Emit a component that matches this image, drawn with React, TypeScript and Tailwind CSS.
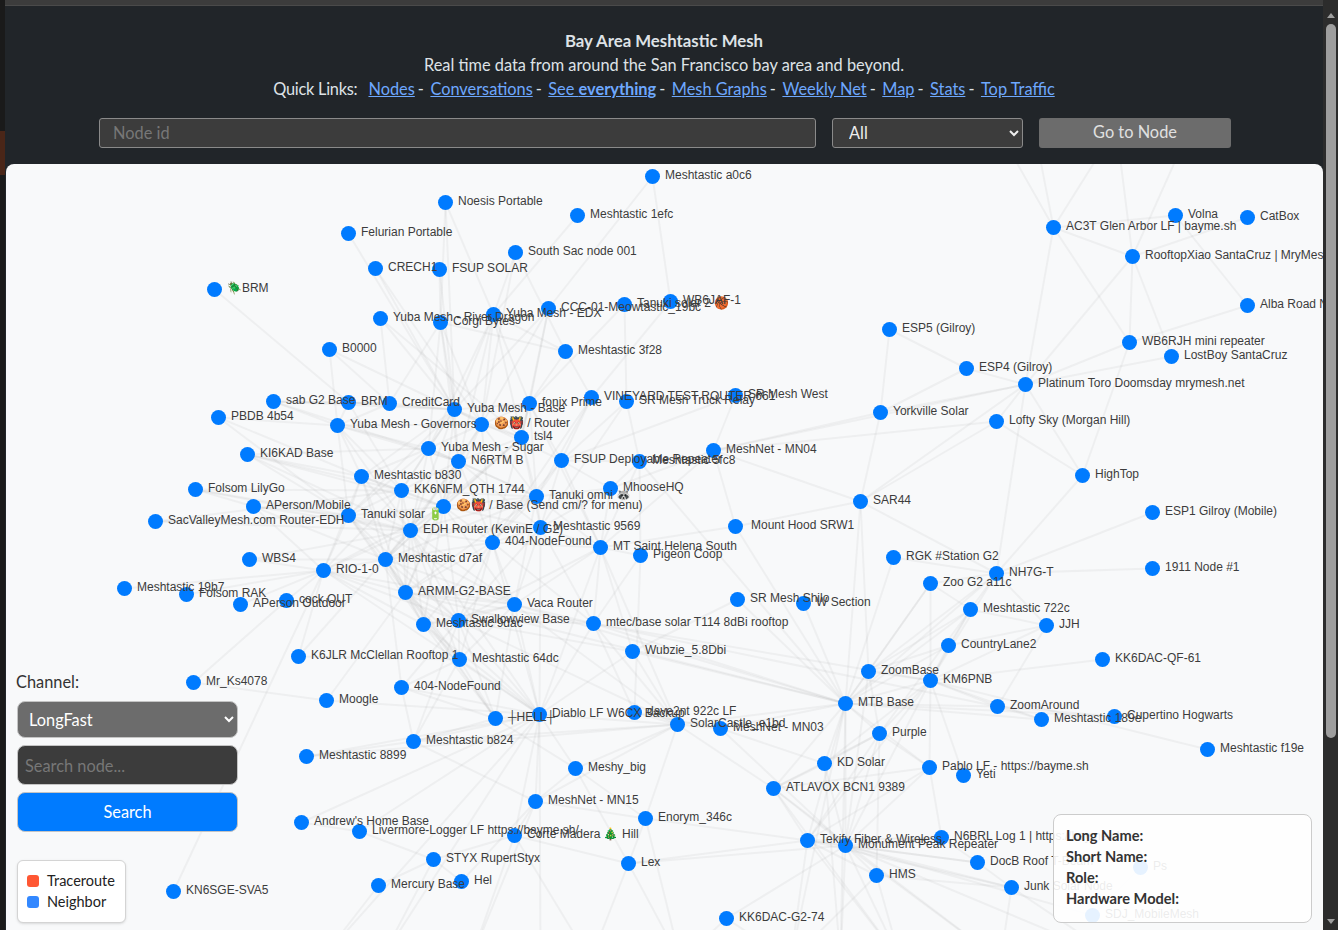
const GRAPH_X = 6;
const GRAPH_Y = 164;

// id, x, y (page coordinates), label, optional label offset
const nodes: [string, number, number, string, number?][] = [
  ["a0c6", 652, 176, "Meshtastic a0c6"],
  ["noesis", 445, 202, "Noesis Portable"],
  ["1efc", 577, 215, "Meshtastic 1efc"],
  ["felurian", 348, 233, "Felurian Portable"],
  ["southsac", 515, 252, "South Sac node 001"],
  ["crech", 375, 268, "CRECH1"],
  ["fsup", 439, 269, "FSUP SOLAR"],
  ["brmbug", 214, 289, "🪲BRM"],
  ["river", 380, 318, "Yuba Mesh - River Dragon"],
  ["corgi", 440, 322, "Corgi Bytes"],
  ["edx", 493, 314, "Yuba Mesh - EDX"],
  ["ccc", 548, 308, "CCC-01-Meowtastic_19bc"],
  ["tanuki2", 624, 304, "Tanuki solar 2 🏀"],
  ["wb6", 670, 301, "WB6JAF-1"],
  ["b0000", 329, 349, "B0000"],
  ["3f28", 565, 351, "Meshtastic 3f28"],
  ["esp5", 889, 329, "ESP5 (Gilroy)"],
  ["esp4", 966, 368, "ESP4 (Gilroy)"],
  ["ac3t", 1053, 227, "AC3T Glen Arbor LF | bayme.sh"],
  ["volna", 1175, 215, "Volna"],
  ["catbox", 1247, 217, "CatBox"],
  ["rooftop", 1132, 256, "RooftopXiao SantaCruz | MryMesh"],
  ["alba", 1247, 305, "Alba Road Node"],
  ["wb6rjh", 1129, 342, "WB6RJH mini repeater"],
  ["lostboy", 1171, 356, "LostBoy SantaCruz"],
  ["platinum", 1025, 384, "Platinum Toro Doomsday mrymesh.net"],
  ["lofty", 996, 421, "Lofty Sky (Morgan Hill)"],
  ["yorkville", 880, 412, "Yorkville Solar"],
  ["sab", 273, 401, "sab G2 Base"],
  ["brm", 348, 402, "BRM"],
  ["credit", 389, 403, "CreditCard"],
  ["yubabase", 454, 409, "Yuba Mesh - Base"],
  ["fonix", 529, 403, "fonix Prime"],
  ["vineyard", 591, 397, "VINEYARD TEST ROUTER 661"],
  ["truck", 626, 401, "SR Mesh Truck Relay"],
  ["srwest", 735, 395, "SR Mesh West"],
  ["pbdb", 218, 417, "PBDB 4b54"],
  ["gov", 337, 425, "Yuba Mesh - Governors"],
  ["router", 481, 424, "🍪👹 / Router"],
  ["tsl4", 521, 437, "tsl4"],
  ["ki6kad", 247, 454, "KI6KAD Base"],
  ["sugar", 428, 448, "Yuba Mesh - Sugar"],
  ["n6rtm", 458, 461, "N6RTM B"],
  ["deploy", 561, 460, "FSUP Deployable Repeater"],
  ["5fc8", 639, 461, "Meshtastic 5fc8"],
  ["mn04", 713, 450, "MeshNet - MN04"],
  ["b830", 361, 476, "Meshtastic b830"],
  ["kk6nfm", 401, 490, "KK6NFM_QTH 1744"],
  ["lily", 195, 489, "Folsom LilyGo"],
  ["mhoose", 610, 488, "MhooseHQ"],
  ["omni", 536, 496, "Tanuki omni 🦝"],
  ["sar44", 860, 501, "SAR44"],
  ["hightop", 1082, 475, "HighTop"],
  ["esp1", 1152, 512, "ESP1 Gilroy (Mobile)"],
  ["mobile", 253, 506, "APerson/Mobile"],
  ["base", 443, 506, "🍪👹 / Base (Send cm/? for menu)"],
  ["solar", 348, 515, "Tanuki solar 🔋"],
  ["sacvalley", 155, 521, "SacValleyMesh.com Router-EDH"],
  ["edh", 410, 530, "EDH Router (KevinE / G2)"],
  ["9569", 540, 527, "Meshtastic 9569"],
  ["srw1", 735, 526, "Mount Hood SRW1", 15.5],
  ["404a", 492, 542, "404-NodeFound"],
  ["helena", 600, 547, "MT Saint Helena South"],
  ["pigeon", 640, 555, "Pigeon Coop"],
  ["wbs4", 249, 559, "WBS4"],
  ["d7af", 385, 559, "Meshtastic d7af"],
  ["rio", 323, 570, "RIO-1-0"],
  ["rgk", 893, 557, "RGK #Station G2"],
  ["nh7g", 996, 573, "NH7G-T"],
  ["zoo", 930, 583, "Zoo G2 a11c"],
  ["1911", 1152, 568, "1911 Node #1"],
  ["19b7", 124, 588, "Meshtastic 19b7"],
  ["rak", 186, 594, "Folsom RAK"],
  ["outdoor", 240, 604, "APerson Outdoor"],
  ["cock", 286, 600, "cock OUT"],
  ["armm", 405, 592, "ARMM-G2-BASE"],
  ["vaca", 514, 604, "Vaca Router"],
  ["shilo", 737, 599, "SR Mesh Shilo"],
  ["wsection", 803, 603, "W Section"],
  ["722c", 970, 609, "Meshtastic 722c"],
  ["jjh", 1046, 625, "JJH"],
  ["swallow", 458, 620, "Swallowview Base"],
  ["9dac", 423, 624, "Meshtastic 9dac"],
  ["mtec", 593, 623, "mtec/base solar T114 8dBi rooftop"],
  ["k6jlr", 298, 656, "K6JLR McClellan Rooftop 1"],
  ["64dc", 459, 659, "Meshtastic 64dc"],
  ["wubzie", 632, 651, "Wubzie_5.8Dbi"],
  ["country", 948, 645, "CountryLane2"],
  ["qf61", 1102, 659, "KK6DAC-QF-61"],
  ["mrks", 193, 682, "Mr_Ks4078"],
  ["zoombase", 868, 671, "ZoomBase"],
  ["km6pnb", 930, 680, "KM6PNB"],
  ["404b", 401, 687, "404-NodeFound"],
  ["moogle", 326, 700, "Moogle"],
  ["mtb", 845, 703, "MTB Base"],
  ["zoomaround", 997, 706, "ZoomAround"],
  ["hell", 495, 718, "┼HELL┼"],
  ["diablo", 539, 714, "Diablo LF W6CX Backup"],
  ["dave", 634, 712, "dave2nt 922c LF"],
  ["castle", 677, 724, "SolarCastle_e1bd"],
  ["mn03", 720, 728, "MeshNet - MN03"],
  ["189e", 1041, 719, "Meshtastic 189e"],
  ["cupertino", 1114, 716, "Cupertino Hogwarts"],
  ["purple", 879, 733, "Purple"],
  ["b824", 413, 741, "Meshtastic b824"],
  ["8899", 306, 756, "Meshtastic 8899"],
  ["f19e", 1207, 749, "Meshtastic f19e"],
  ["kd", 824, 763, "KD Solar"],
  ["pablo", 929, 767, "Pablo LF - https://bayme.sh"],
  ["yeti", 963, 775, "Yeti"],
  ["meshy", 575, 768, "Meshy_big"],
  ["atlavox", 773, 788, "ATLAVOX BCN1 9389"],
  ["mn15", 535, 801, "MeshNet - MN15"],
  ["enorym", 645, 818, "Enorym_346c"],
  ["andrew", 301, 822, "Andrew's Home Base"],
  ["livermore", 359, 831, "Livermore-Logger LF https://bayme.sh/"],
  ["corte", 514, 835, "Corte Madera 🎄 Hill"],
  ["tekify", 807, 840, "Tekify Fiber & Wireless"],
  ["monument", 845, 845, "Monument Peak Repeater"],
  ["n6brl", 941, 837, "N6BRL Log 1 | https://bayme.sh"],
  ["styx", 433, 859, "STYX RupertStyx"],
  ["lex", 628, 863, "Lex"],
  ["docb", 977, 862, "DocB Roof T-Beam"],
  ["ps", 1140, 867, "Ps"],
  ["hms", 876, 875, "HMS"],
  ["hel", 461, 881, "Hel"],
  ["mercury", 378, 885, "Mercury Base"],
  ["junk", 1011, 887, "Junk Solar Node"],
  ["kn6sge", 173, 891, "KN6SGE-SVA5"],
  ["g274", 726, 918, "KK6DAC-G2-74"],
  ["sdj", 1092, 915, "SDJ_MobileMesh"],
];

// nodes just outside the visible part of the graph, only their links show
const offscreen: Record<string, [number, number]> = {
  t1: [1015, 160], t2: [1040, 160], t3: [1095, 160], t4: [1120, 160], t5: [1175, 160],
  b1: [320, 960], b2: [380, 960], b3: [470, 960], b4: [540, 960], b5: [590, 960],
  b6: [680, 960], b7: [790, 960], b8: [840, 960], b9: [900, 960], b10: [1000, 960], b11: [1120, 960],
};

// hub: neighbours
const links: Record<string, string> = {
  a0c6: "wb6 ccc",
  "1efc": "edx",
  noesis: "corgi edx yubabase",
  felurian: "yubabase",
  crech: "yubabase router",
  fsup: "corgi yubabase",
  southsac: "edx 3f28 router",
  brmbug: "brm",
  river: "credit yubabase tsl4",
  corgi: "credit yubabase router 3f28 sugar n6rtm",
  edx: "yubabase fonix 3f28 router n6rtm sugar tsl4",
  ccc: "fonix router tsl4 yubabase",
  tanuki2: "fonix truck",
  wb6: "vineyard",
  b0000: "yubabase credit gov",
  "3f28": "fonix vineyard",
  esp5: "esp4 yorkville",
  esp4: "platinum yorkville",
  ac3t: "t1 t2 t3 volna rooftop wb6rjh platinum",
  rooftop: "t4 t5 catbox wb6rjh lostboy platinum",
  alba: "volna wb6rjh",
  wb6rjh: "platinum hightop",
  lostboy: "platinum",
  platinum: "yorkville lofty hightop sar44 mn04 nh7g",
  lofty: "sar44 hightop mn04",
  yorkville: "mn04 sar44",
  sab: "brm credit gov yubabase n6rtm",
  brm: "credit gov yubabase kk6nfm",
  credit: "yubabase gov",
  yubabase: "router tsl4 sugar n6rtm b830 kk6nfm base solar edh fonix deploy",
  fonix: "router tsl4 omni deploy 404a helena",
  vineyard: "deploy omni 404a",
  truck: "deploy 5fc8 9569",
  srwest: "mn04 deploy",
  pbdb: "gov b830 solar",
  gov: "router sugar b830 kk6nfm solar edh n6rtm",
  router: "tsl4 sugar n6rtm omni base edh 404a",
  tsl4: "n6rtm omni base edh 9569 d7af",
  ki6kad: "sugar b830 solar kk6nfm edh base",
  sugar: "n6rtm b830 kk6nfm base solar edh omni",
  n6rtm: "kk6nfm base omni edh d7af 404a 9569 armm",
  deploy: "omni mhoose 404a helena 5fc8 9569",
  "5fc8": "mhoose helena pigeon mtb",
  mn04: "mhoose sar44 srw1 helena",
  b830: "kk6nfm solar base edh d7af rio armm",
  kk6nfm: "base solar edh d7af rio armm omni",
  lily: "solar kk6nfm edh mobile",
  mhoose: "omni helena 9569",
  omni: "base edh 404a 9569 d7af helena armm vaca",
  sar44: "srw1 mtb zoombase nh7g",
  hightop: "nh7g",
  esp1: "nh7g",
  mobile: "solar edh d7af rio",
  base: "solar edh 404a 9569 d7af rio armm vaca swallow 9dac",
  solar: "edh d7af rio armm swallow 9dac vaca",
  sacvalley: "solar edh kk6nfm",
  edh: "9569 404a d7af rio armm vaca swallow 9dac 64dc diablo k6jlr wbs4",
  "9569": "404a helena vaca swallow mtec diablo",
  srw1: "mtb helena",
  "404a": "helena vaca swallow 9dac mtec 64dc diablo d7af armm",
  helena: "pigeon vaca mtec swallow diablo wubzie castle",
  pigeon: "mtec dave",
  wbs4: "rio d7af",
  d7af: "rio armm vaca swallow 9dac 64dc hell 404b",
  rio: "armm vaca swallow 9dac k6jlr cock outdoor rak 19b7 diablo",
  rgk: "nh7g mtb",
  nh7g: "1911 722c jjh zoo mtb km6pnb zoombase",
  zoo: "722c km6pnb mtb zoombase",
  armm: "vaca swallow 9dac 64dc diablo mtec mtb hell moogle",
  vaca: "swallow 9dac mtec 64dc diablo mtb castle hell",
  shilo: "mtb wubzie",
  wsection: "mtb",
  "722c": "jjh country km6pnb mtb zoombase purple",
  jjh: "country zoomaround km6pnb",
  swallow: "9dac 64dc diablo mtec hell castle 404b wubzie b824",
  "9dac": "64dc hell diablo",
  mtec: "diablo mtb km6pnb zoomaround castle dave",
  k6jlr: "64dc",
  "64dc": "diablo hell 404b b824",
  wubzie: "diablo castle mtb",
  country: "mtb km6pnb zoombase",
  qf61: "km6pnb",
  mrks: "cock moogle",
  zoombase: "mtb km6pnb purple monument",
  km6pnb: "mtb zoomaround 189e f19e purple pablo kd tekify monument yeti",
  "404b": "hell diablo b824",
  moogle: "diablo",
  mtb: "zoomaround 189e cupertino purple kd pablo atlavox tekify monument castle mn03 b7 b8",
  zoomaround: "189e cupertino",
  hell: "b824 diablo meshy",
  diablo: "b824 8899 meshy mn15 andrew b1 b2 b4 castle livermore corte",
  dave: "castle mn03",
  castle: "mn03 meshy atlavox mn15 enorym b824 8899",
  mn03: "kd monument",
  purple: "kd monument tekify pablo atlavox hms",
  b824: "8899 mn15",
  kd: "monument atlavox b8",
  pablo: "monument tekify n6brl atlavox",
  meshy: "mn15 enorym lex",
  atlavox: "tekify monument b9 b10",
  mn15: "enorym corte b3 hel",
  enorym: "lex tekify b6",
  andrew: "livermore",
  livermore: "styx",
  corte: "styx b3 b5 lex",
  tekify: "monument n6brl docb hms lex b7 b9 junk",
  monument: "n6brl docb hms junk lex b8 b9 b10 b11 g274 sdj",
  n6brl: "docb",
  styx: "mercury hel b2",
  lex: "b5 b6",
  docb: "junk",
  hms: "junk b7 b9",
  ps: "sdj",
  junk: "b10 b11",
  kn6sge: "rio",
  mercury: "b1",
  g274: "b6 b7",
};

const position: Record<string, [number, number]> = { ...offscreen };
nodes.forEach(([id, x, y]) => {
  position[id] = [x, y];
});

const edges = Object.entries(links).flatMap(([hub, others]) =>
  others.split(" ").map((other) => [position[hub], position[other]]),
);

const headerLinks = ["Nodes", "Conversations", "See everything", "Mesh Graphs", "Weekly Net", "Map", "Stats", "Top Traffic"];

const MeshGraph = () => (
  <svg width={1317} height={766} className="block" style={{ fontFamily: '"Liberation Sans", "Noto Color Emoji", sans-serif' }}>
    <g transform={`translate(${0.5 - GRAPH_X} ${0.5 - GRAPH_Y})`}>
      {edges.map(([a, b], i) => (
        <line key={i} x1={a[0]} y1={a[1]} x2={b[0]} y2={b[1]} stroke="#a8a8a8" strokeOpacity={0.11} strokeWidth={2} />
      ))}
      {nodes.map(([id, x, y]) => (
        <circle key={id} cx={x} cy={y} r={7.5} fill="#007bff" />
      ))}
      {nodes.map(([id, x, y, label, dx]) => (
        <text key={id} x={x + (dx ?? 12.5)} y={y + 2.6} fontSize={12} fill="#3c3c3c">
          {label}
        </text>
      ))}
    </g>
  </svg>
);

export default function App() {
  return (
    <div className="flex h-[930px] w-[1338px] overflow-hidden bg-[#212529] font-['Lato',sans-serif] text-white">
      <div className="flex w-[5px] flex-col bg-[#1a1a1a]">
        <div className="h-[131px]" />
        <div className="h-[44px] bg-[#4a2618]" />
      </div>

      <div className="flex w-[1318px] flex-col">
        <div className="h-[6px] shrink-0 border-b border-[#4a4a4a] bg-[#3c3c3c]" />
        <div className="h-[158px] shrink-0">
          <div className="pt-[23px] text-center text-[16.35px] leading-6 text-[#dee2e6]">
            <div className="text-[16.8px] font-bold">Bay Area Meshtastic Mesh</div>
            <div>Real time data from around the San Francisco bay area and beyond.</div>
            <div>
              <span className="tracking-[-0.25px]">Quick Links:</span>
              <span className="ml-[11px]">
                {headerLinks.map((link, i) => (
                  <span key={link}>
                    <a href="#" className="text-[#6ea8fe] underline">
                      {link === "See everything" ? (
                        <>
                          See <b>everything</b>
                        </>
                      ) : (
                        link
                      )}
                    </a>
                    {i < headerLinks.length - 1 && <span className="mr-[6.5px] ml-[3px]">-</span>}
                  </span>
                ))}
              </span>
            </div>
          </div>
          <div className="mt-[17px] flex gap-4 pr-[92px] pl-[94px] text-[16.35px]">
            <input
              placeholder="Node id"
              className="h-[30px] min-w-0 flex-1 rounded-[3px] border border-[#8a8a8a] bg-[#3c3c3c] px-[13px] pb-px placeholder:text-[#777]"
            />
            <select className="h-[30px] w-[191px] rounded-[3px] border border-[#8a8a8a] bg-[#3c3c3c] px-[12px] pb-px text-[#eee]">
              <option>All</option>
            </select>
            <button className="h-[30px] w-[192px] rounded-[3px] bg-[#6c6c6c] pb-px text-[#e0e0e0]">Go to Node</button>
          </div>
        </div>

        <div className="relative ml-px flex-1 overflow-hidden rounded-t-lg bg-[#f8f9fa]">
          <MeshGraph />

          <div className="absolute top-[507px] left-[11px] flex w-[221px] flex-col gap-[7px] text-[16.35px]">
            <div className="-ml-px h-[23px] text-[#333] leading-[22px]">Channel:</div>
            <select className="h-[37px] rounded-lg border border-[#c4c4c4] bg-[#6c6c6c] px-[7px] text-white">
              <option>LongFast</option>
            </select>
            <input
              placeholder="Search node..."
              className="h-[40px] rounded-lg border border-[#c4c4c4] bg-[#3c3c3c] px-[7px] placeholder:text-[#777]"
            />
            <button className="h-[40px] rounded-lg border border-[#c4c4c4] bg-[#007bff] text-white">Search</button>
          </div>

          <div className="absolute top-[696px] left-[11px] h-[63px] w-[109px] rounded-md border border-[#d4d4d4] bg-white px-[9px] py-[9px] text-[14.5px] leading-[21px] text-[#222] shadow-sm">
            <div className="flex items-center gap-[8px]">
              <span className="size-3 shrink-0 rounded-[3px] bg-[#ff5733]" />
              Traceroute
            </div>
            <div className="flex items-center gap-[8px]">
              <span className="size-3 shrink-0 rounded-[3px] bg-[#3388ff]" />
              Neighbor
            </div>
          </div>

          <div className="absolute top-[650px] left-[1047px] h-[109px] w-[259px] rounded-lg border border-[#ccc] bg-white/90 px-3 py-[10px] text-[14.6px] leading-[21px] font-bold text-[#333]">
            <div>Long Name:</div>
            <div>Short Name:</div>
            <div>Role:</div>
            <div>Hardware Model:</div>
          </div>
        </div>
      </div>

      <div className="flex w-[15px] flex-col items-center bg-[#2c2c2c] pt-[13px] pl-[1px]">
        <div className="h-0 w-0 border-x-[4px] border-b-[5px] border-x-transparent border-b-[#9e9e9e]" />
        <div className="mt-[6px] h-[714px] w-[10px] rounded-full bg-[#9e9e9e]" />
        <div className="mt-[181px] h-0 w-0 border-x-[4px] border-t-[5px] border-x-transparent border-t-[#9e9e9e]" />
      </div>
    </div>
  );
}
